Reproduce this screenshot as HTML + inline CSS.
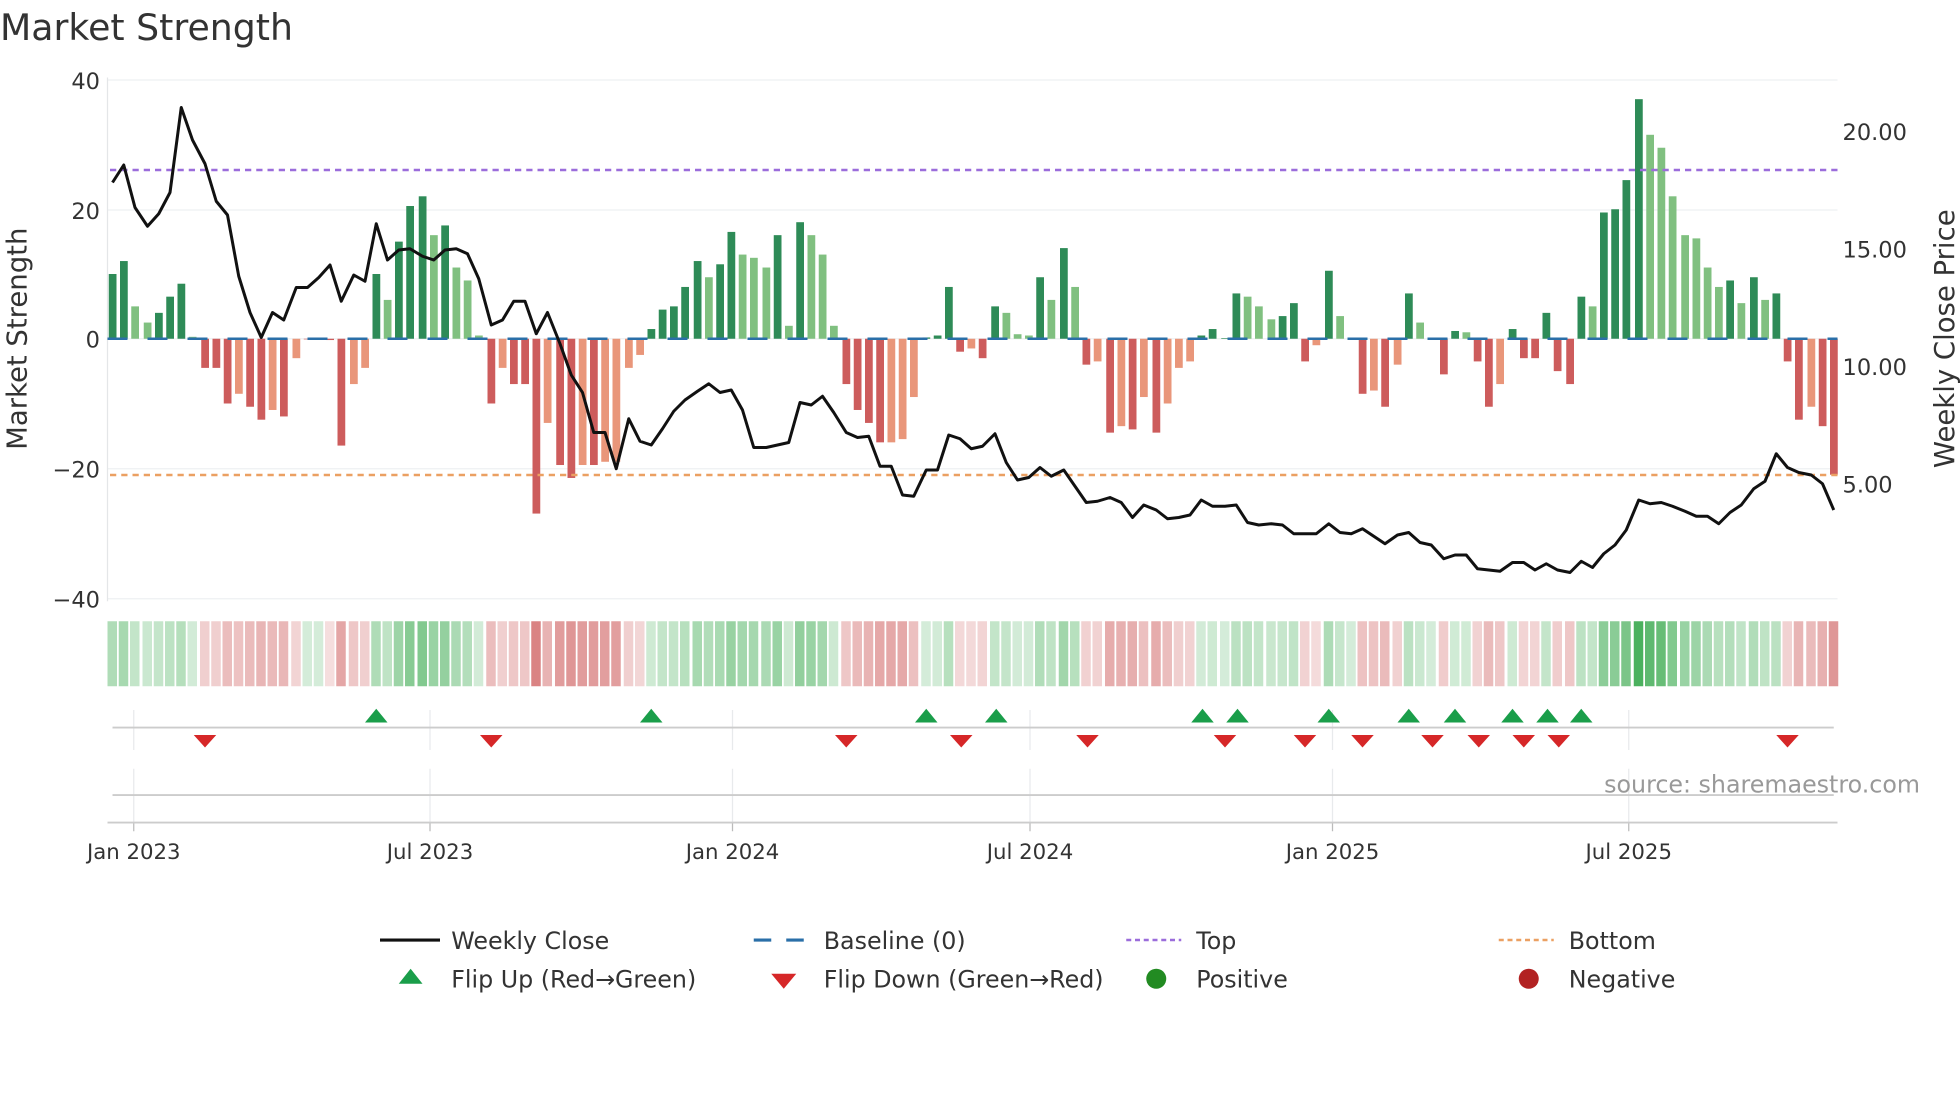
<!DOCTYPE html>
<html><head><meta charset="utf-8"><style>
html,body{margin:0;padding:0;background:#fff;}
svg{display:block;font-family:"DejaVu Sans","Liberation Sans",sans-serif;}
</style></head><body>
<svg id="s" width="1960" height="1102" viewBox="0 0 1568 881.6" xmlns="http://www.w3.org/2000/svg">
<text x="0" y="32" font-size="29" fill="#333">Market Strength</text>
<g id="g"></g>
</svg>
<script>
let h='';
const Y=v=>271-v*5.18;
[64,168,271,375,479].forEach((y,i)=>{h+=`<line x1="86" x2="1470" y1="${y}" y2="${y}" stroke="#eef0f2" stroke-width="1"/>`;});
h+=`<line x1="86" x2="86" y1="62" y2="481" stroke="#e4e6e8"/>`;
[['40',64],['20',168],['0',271],['\u221220',375],['\u221240',479]].forEach(([t,y])=>{h+=`<text x="80" y="${y+7}" font-size="18" text-anchor="end" fill="#333">${t}</text>`;});
[['20.00',105],['15.00',199],['10.00',293],['5.00',387]].forEach(([t,y])=>{h+=`<text x="1474" y="${y+7}" font-size="18" fill="#333">${t}</text>`;});
h+=`<text transform="translate(21,271) rotate(-90)" font-size="22" text-anchor="middle" fill="#333">Market Strength</text>`;
h+=`<text transform="translate(1563,271) rotate(-90)" font-size="22" text-anchor="middle" fill="#333">Weekly Close Price</text>`;
const bars=[[90,10,'d'],[99,12,'d'],[108,5,'l'],[118,2.5,'l'],[127,4,'d'],[136,6.5,'d'],[145,8.5,'d'],[154,0.3,'l'],[164,-4.5,'r'],[173,-4.5,'r'],[182,-10,'r'],[191,-8.5,'s'],[200,-10.5,'r'],[209,-12.5,'r'],[218,-11,'s'],[227,-12,'r'],[237,-3,'s'],[246,0,'r'],[255,0,'r'],[264,-0.2,'r'],[273,-16.5,'r'],[283,-7,'s'],[292,-4.5,'s'],[301,10,'d'],[310,6,'l'],[319,15,'d'],[328,20.5,'d'],[338,22,'d'],[347,16,'l'],[356,17.5,'d'],[365,11,'l'],[374,9,'l'],[383,0.5,'l'],[393,-10,'r'],[402,-4.5,'s'],[411,-7,'r'],[420,-7,'r'],[429,-27,'r'],[438,-13,'s'],[448,-19.5,'r'],[457,-21.5,'r'],[466,-19.5,'s'],[475,-19.5,'r'],[484,-19,'s'],[493,-19,'s'],[503,-4.5,'s'],[512,-2.5,'s'],[521,1.5,'d'],[530,4.5,'d'],[539,5,'d'],[548,8,'d'],[558,12,'d'],[567,9.5,'l'],[576,11.5,'d'],[585,16.5,'d'],[594,13,'l'],[603,12.5,'l'],[613,11,'l'],[622,16,'d'],[631,2,'l'],[640,18,'d'],[649,16,'l'],[658,13,'l'],[667,2,'l'],[677,-7,'r'],[686,-11,'r'],[695,-13,'r'],[704,-16,'r'],[713,-16,'s'],[722,-15.5,'s'],[731,-9,'s'],[741,0.2,'d'],[750,0.5,'d'],[759,8,'d'],[768,-2,'r'],[777,-1.5,'s'],[786,-3,'r'],[796,5,'d'],[805,4,'l'],[814,0.7,'l'],[823,0.5,'l'],[832,9.5,'d'],[841,6,'l'],[851,14,'d'],[860,8,'l'],[869,-4,'r'],[878,-3.5,'s'],[888,-14.5,'r'],[897,-13.5,'s'],[906,-14,'r'],[915,-9,'s'],[925,-14.5,'r'],[934,-10,'s'],[943,-4.5,'s'],[952,-3.5,'s'],[961,0.5,'d'],[970,1.5,'d'],[980,0.1,'d'],[989,7,'d'],[998,6.5,'l'],[1007,5,'l'],[1017,3,'l'],[1026,3.5,'d'],[1035,5.5,'d'],[1044,-3.5,'r'],[1053,-1,'s'],[1063,10.5,'d'],[1072,3.5,'l'],[1081,0.1,'l'],[1090,-8.5,'r'],[1099,-8,'s'],[1108,-10.5,'r'],[1118,-4,'s'],[1127,7,'d'],[1136,2.5,'l'],[1145,0.1,'l'],[1155,-5.5,'r'],[1164,1.2,'d'],[1173,1,'l'],[1182,-3.5,'r'],[1191,-10.5,'r'],[1200,-7,'s'],[1210,1.5,'d'],[1219,-3,'r'],[1228,-3,'r'],[1237,4,'d'],[1246,-5,'r'],[1256,-7,'r'],[1265,6.5,'d'],[1274,5,'l'],[1283,19.5,'d'],[1292,20,'d'],[1301,24.5,'d'],[1311,37,'d'],[1320,31.5,'l'],[1329,29.5,'l'],[1338,22,'l'],[1348,16,'l'],[1357,15.5,'l'],[1366,11,'l'],[1375,8,'l'],[1384,9,'d'],[1393,5.5,'l'],[1403,9.5,'d'],[1412,6,'l'],[1421,7,'d'],[1430,-3.5,'r'],[1439,-12.5,'r'],[1449,-10.5,'s'],[1458,-13.5,'r'],[1467,-21,'r']];
const col={d:'#2e8b57',l:'#80c080',r:'#cd5c5c',s:'#e9967a'};
bars.forEach(([x,v,t])=>{const y0=271,y1=Y(v);h+=`<rect x="${x-3}" y="${Math.min(y0,y1)}" width="6.2" height="${Math.max(0.5,Math.abs(y1-y0))}" fill="${col[t]}"/>`;});
h+=`<line x1="86" x2="1470" y1="271" y2="271" stroke="#2a6fa8" stroke-width="2" stroke-dasharray="16 16"/>`;
h+=`<line x1="88" x2="1470" y1="136" y2="136" stroke="#9b6ddb" stroke-width="2" stroke-dasharray="5 4"/>`;
h+=`<line x1="88" x2="1470" y1="380" y2="380" stroke="#eba062" stroke-width="2" stroke-dasharray="5 4"/>`;
const p="90,146 99,132 108,166 118,181 127,171 136,154 145,86 154,112 164,131 173,161 182,172 191,221 200,250 209,270 218,250 227,256 237,230 246,230 255,222 264,212 273,241 283,220 292,225 301,179 310,208 319,200 328,199 338,205 347,208 356,200 365,199 374,203 383,223 393,260 402,256 411,241 420,241 429,267 438,250 448,275 457,300 466,314 475,346 484,346 493,375 503,335 512,353 521,356 530,343 539,329 548,320 558,313 567,307 576,314 585,312 594,328 603,358 613,358 622,356 631,354 640,322 649,324 658,317 667,330 677,346 686,350 695,349 704,373 713,373 722,396 731,397 741,376 750,376 759,348 768,351 777,359 786,357 796,347 805,370 814,384 823,382 832,374 841,381 851,376 860,389 869,402 878,401 888,398 897,402 906,414 915,404 925,408 934,415 943,414 952,412 961,400 970,405 980,405 989,404 998,418 1007,420 1017,419 1026,420 1035,427 1044,427 1053,427 1063,419 1072,426 1081,427 1090,423 1099,429 1108,435 1118,428 1127,426 1136,434 1145,436 1155,447 1164,444 1173,444 1182,455 1191,456 1200,457 1210,450 1219,450 1228,456 1237,451 1246,456 1256,458 1265,449 1274,454 1283,443 1292,436 1301,424 1311,400 1320,403 1329,402 1338,405 1348,409 1357,413 1366,413 1375,419 1384,410 1393,404 1403,391 1412,385 1421,363 1430,374 1439,378 1449,380 1458,387 1467,408";
h+=`<polyline points="${p}" fill="none" stroke="#111" stroke-width="2.4" stroke-linejoin="round"/>`;
bars.forEach(([x,v])=>{let c;const a=Math.abs(v);
 if(v>=0){const t=Math.min(1,a/37);c=`rgba(60,170,80,${(0.22+0.7*t).toFixed(2)})`;}
 else{const t=Math.min(1,a/27);c=`rgba(205,90,90,${(0.2+0.55*t).toFixed(2)})`;}
 h+=`<rect x="${x-4}" y="497" width="7.6" height="52" fill="${c}"/>`;});
[107,344,586,824,1066,1303].forEach(x=>{h+=`<line x1="${x}" x2="${x}" y1="568" y2="600" stroke="#e8eaec"/><line x1="${x}" x2="${x}" y1="615" y2="658" stroke="#e8eaec"/><line x1="${x}" x2="${x}" y1="658" y2="665" stroke="#bbb"/>`;});
h+=`<line x1="90" x2="1467" y1="582" y2="582" stroke="#ccc" stroke-width="1.5"/>`;
h+=`<line x1="90" x2="1467" y1="636" y2="636" stroke="#ccc" stroke-width="1.5"/>`;
h+=`<line x1="86" x2="1470" y1="658" y2="658" stroke="#ccc" stroke-width="1.5"/>`;
[301,521,741,797,962,990,1063,1127,1164,1210,1238,1265].forEach(x=>{h+=`<polygon points="${x-9},578 ${x+9},578 ${x},567" fill="#1a9e4a"/>`;});
[164,393,677,769,870,980,1044,1090,1146,1183,1219,1247,1430].forEach(x=>{h+=`<polygon points="${x-9},588 ${x+9},588 ${x},598" fill="#d62728"/>`;});
h+=`<text x="1536" y="634" font-size="19" text-anchor="end" fill="#999">source: sharemaestro.com</text>`;
[['Jan 2023',107],['Jul 2023',344],['Jan 2024',586],['Jul 2024',824],['Jan 2025',1066],['Jul 2025',1303]].forEach(([t,x])=>{h+=`<text x="${x}" y="687" font-size="17" text-anchor="middle" fill="#333">${t}</text>`;});
const L=(x,y,t)=>`<text x="${x}" y="${y+7}" font-size="19" fill="#333">${t}</text>`;
h+=`<line x1="304" x2="352" y1="752" y2="752" stroke="#111" stroke-width="2.5"/>`+L(361,752,'Weekly Close');
h+=`<line x1="603" x2="650" y1="752" y2="752" stroke="#2a6fa8" stroke-width="2.5" stroke-dasharray="14 12"/>`+L(659,752,'Baseline (0)');
h+=`<line x1="901" x2="945" y1="752" y2="752" stroke="#9b6ddb" stroke-width="2" stroke-dasharray="4 3"/>`+L(957,752,'Top');
h+=`<line x1="1199" x2="1243" y1="752" y2="752" stroke="#eba062" stroke-width="2" stroke-dasharray="4 3"/>`+L(1255,752,'Bottom');
h+=`<polygon points="319,787 338,787 328.5,775" fill="#1a9e4a"/>`+L(361,783,'Flip Up (Red\u2192Green)');
h+=`<polygon points="617,779 637,779 627,791" fill="#d62728"/>`+L(659,783,'Flip Down (Green\u2192Red)');
h+=`<circle cx="925" cy="783" r="8" fill="#228b22"/>`+L(957,783,'Positive');
h+=`<circle cx="1223" cy="783" r="8" fill="#b22222"/>`+L(1255,783,'Negative');
document.getElementById('g').innerHTML=h;
</script>
</body></html>
